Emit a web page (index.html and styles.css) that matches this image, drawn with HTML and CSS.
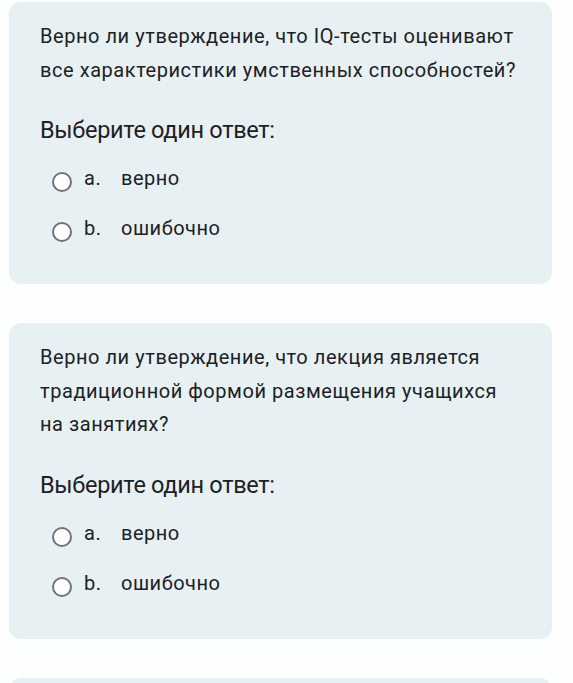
FILE: index.html
```
<!DOCTYPE html>
<html lang="ru">
<head>
    <meta charset="UTF-8">
    <meta name="viewport" content="width=device-width, initial-scale=1.0">
    <title>Тест</title>
    <link rel="stylesheet" href="styles.css">
</head>
<body>

    <div class="quiz">
        <div class="question">
            <p class="question-text">Верно ли утверждение, что IQ-тесты оценивают все характеристики умственных способностей?</p>
            <div class="prompt">Выберите один ответ:</div>
            <div class="answers">
                <label class="answer">
                    <span class="radio"></span>
                    <span class="letter">a.</span>
                    <span>верно</span>
                </label>
                <label class="answer">
                    <span class="radio"></span>
                    <span class="letter">b.</span>
                    <span>ошибочно</span>
                </label>
            </div>
        </div>

        <div class="question">
            <p class="question-text">Верно ли утверждение, что лекция является традиционной формой размещения учащихся на занятиях?</p>
            <div class="prompt">Выберите один ответ:</div>
            <div class="answers">
                <label class="answer">
                    <span class="radio"></span>
                    <span class="letter">a.</span>
                    <span>верно</span>
                </label>
                <label class="answer">
                    <span class="radio"></span>
                    <span class="letter">b.</span>
                    <span>ошибочно</span>
                </label>
            </div>
        </div>

        <div class="question"></div>
    </div>

</body>
</html>
```

FILE: styles.css
```
body {
    font-family: Roboto, "Noto Sans", Arial, sans-serif;
    background-color: #fdfefe;
    color: #1d2125;
    margin: 0;
}
.quiz {
    padding: 2px 21px 0 9px;
}
.question {
    background: #e7f1f3;
    border-radius: 12px;
    padding: 18px 30px 31px 31px;
    margin-bottom: 39px;
    min-height: 60px;
}
.question-text {
    margin: 0;
    font-size: 20px;
    line-height: 33.5px;
    letter-spacing: 0.55px;
}
.prompt {
    margin-top: 28px;
    font-size: 23.5px;
    line-height: 30px;
    letter-spacing: -0.3px;
}
.answers {
    margin-top: 8px;
    padding-left: 12px;
}
.answer {
    display: flex;
    align-items: center;
    height: 50px;
    font-size: 20px;
    letter-spacing: 0.5px;
}
.radio {
    width: 16px;
    height: 16px;
    border: 2px solid #6f7479;
    border-radius: 50%;
    background: white;
    margin-top: 8px;
    margin-right: 12px;
    flex-shrink: 0;
}
.letter {
    width: 37px;
}
```
